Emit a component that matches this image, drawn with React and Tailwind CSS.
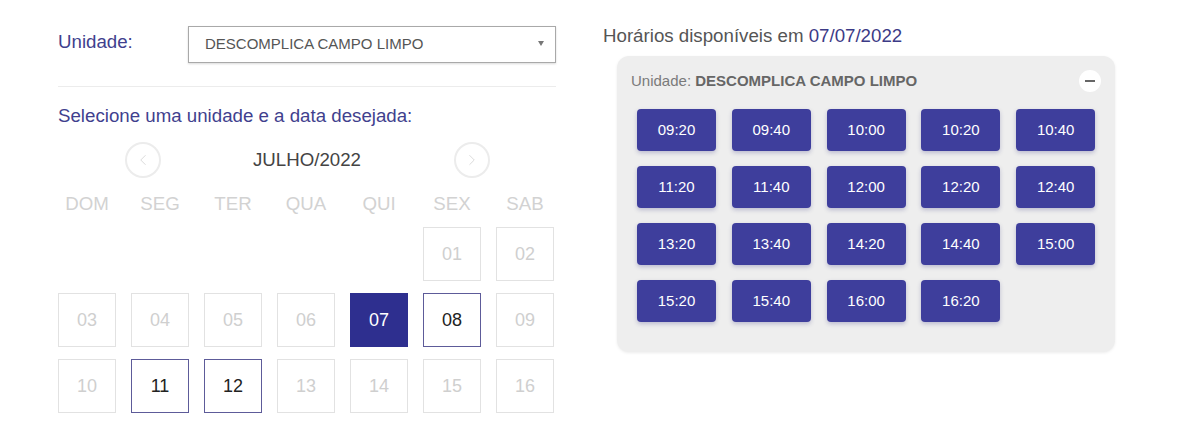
import { ChevronLeft, ChevronRight } from 'lucide-react'

const WEEKDAYS = ['DOM', 'SEG', 'TER', 'QUA', 'QUI', 'SEX', 'SAB']

// null = empty slot before the 1st
const DAYS = [
  null, null, null, null, null, '01', '02',
  '03', '04', '05', '06', '07', '08', '09',
  '10', '11', '12', '13', '14', '15', '16'
]
const AVAILABLE = ['08', '11', '12']
const SELECTED = '07'

const TIMES = [
  '09:20', '09:40', '10:00', '10:20', '10:40',
  '11:20', '11:40', '12:00', '12:20', '12:40',
  '13:20', '13:40', '14:20', '14:40', '15:00',
  '15:20', '15:40', '16:00', '16:20'
]

function DayCell({ day }) {
  if (!day) return <div className="h-[54px]" />

  if (day === SELECTED) {
    return (
      <div className="h-[54px] flex items-center justify-center bg-[#2e2f8f] text-white text-[18px]">
        {day}
      </div>
    )
  }

  if (AVAILABLE.includes(day)) {
    return (
      <div className="h-[54px] flex items-center justify-center border border-[#5d5b99] text-[#222] text-[18px]">
        {day}
      </div>
    )
  }

  return (
    <div className="h-[54px] flex items-center justify-center border border-[#e2e2e2] text-[#cfcfcf] text-[18px]">
      {day}
    </div>
  )
}

export default function App() {
  return (
    <div className="w-[1180px] h-[422px] bg-white flex pl-[58px] pt-[26px] font-['Liberation_Sans',Arial,sans-serif]">
      {/* Left: unit + calendar */}
      <div className="w-[498px]">
        <div className="flex items-start">
          <label className="w-[130px] pt-[5px] text-[18.7px] leading-[22px] text-[#413f8e]">Unidade:</label>
          <div className="relative w-[368px] h-[37px] border border-[#a9a9a9] shadow-[0_1px_2px_rgba(0,0,0,0.15)] flex items-center pl-[16px] text-[15px] text-[#555]">
            DESCOMPLICA CAMPO LIMPO
            <span className="absolute right-[11px] top-[14px] w-0 h-0 border-l-[3.5px] border-r-[3.5px] border-t-[5px] border-l-transparent border-r-transparent border-t-[#777]" />
          </div>
        </div>

        <div className="mt-[23px] border-t border-[#ececec]" />

        <p className="mt-[18px] text-[18.7px] leading-[22px] text-[#413f8e]">Selecione uma unidade e a data desejada:</p>

        {/* Month nav */}
        <div className="mt-[15px] flex items-center justify-center">
          <button className="w-[36px] h-[36px] rounded-full border-2 border-[#ececec] flex items-center justify-center text-[#d8d8d8]">
            <ChevronLeft size={18} strokeWidth={1.25} />
          </button>
          <div className="w-[293px] text-center text-[18.7px] leading-[22px] text-[#444]">JULHO/2022</div>
          <button className="w-[36px] h-[36px] rounded-full border-2 border-[#ececec] flex items-center justify-center text-[#d8d8d8]">
            <ChevronRight size={18} strokeWidth={1.25} />
          </button>
        </div>

        {/* Weekday headers */}
        <div className="mt-[15px] grid grid-cols-7 gap-x-[15px] pr-[2px]">
          {WEEKDAYS.map((d) => (
            <div key={d} className="text-center text-[18.7px] text-[#d2d2d2] leading-[22px]">
              {d}
            </div>
          ))}
        </div>

        {/* Days */}
        <div className="mt-[12px] grid grid-cols-7 gap-x-[15px] gap-y-[12px] pr-[2px]">
          {DAYS.map((d, i) => (
            <DayCell key={i} day={d} />
          ))}
        </div>
      </div>

      {/* Right: available times */}
      <div className="ml-[47px] w-[520px]">
        <h2 className="-mt-[1px] text-[18.7px] text-[#555] leading-[22px]">
          Horários disponíveis em <span className="text-[#3c3a86]">07/07/2022</span>
        </h2>

        <div className="mt-[9px] ml-[14px] w-[498px] rounded-[12px] bg-[#eeeeee] shadow-[0_1px_3px_rgba(0,0,0,0.08)] pt-[14px] pb-[30px]">
          <div className="flex items-center justify-between pl-[14px] pr-[14px] h-[22px]">
            <span className="text-[15px] text-[#7a7a7a]">
              Unidade: <b className="text-[#666]">DESCOMPLICA CAMPO LIMPO</b>
            </span>
            <span className="w-[22px] h-[22px] rounded-full bg-white flex items-center justify-center">
              <span className="w-[10px] h-[2px] bg-[#666]" />
            </span>
          </div>

          <div className="mt-[17px] px-[20px] grid grid-cols-5 gap-x-[16px] gap-y-[15px]">
            {TIMES.map((t) => (
              <button
                key={t}
                className="w-[79px] h-[42px] rounded-[4px] bg-[#3e3e9c] text-white text-[15px] shadow-[0_2px_4px_rgba(40,40,120,0.25)]"
              >
                {t}
              </button>
            ))}
          </div>
        </div>
      </div>
    </div>
  )
}
